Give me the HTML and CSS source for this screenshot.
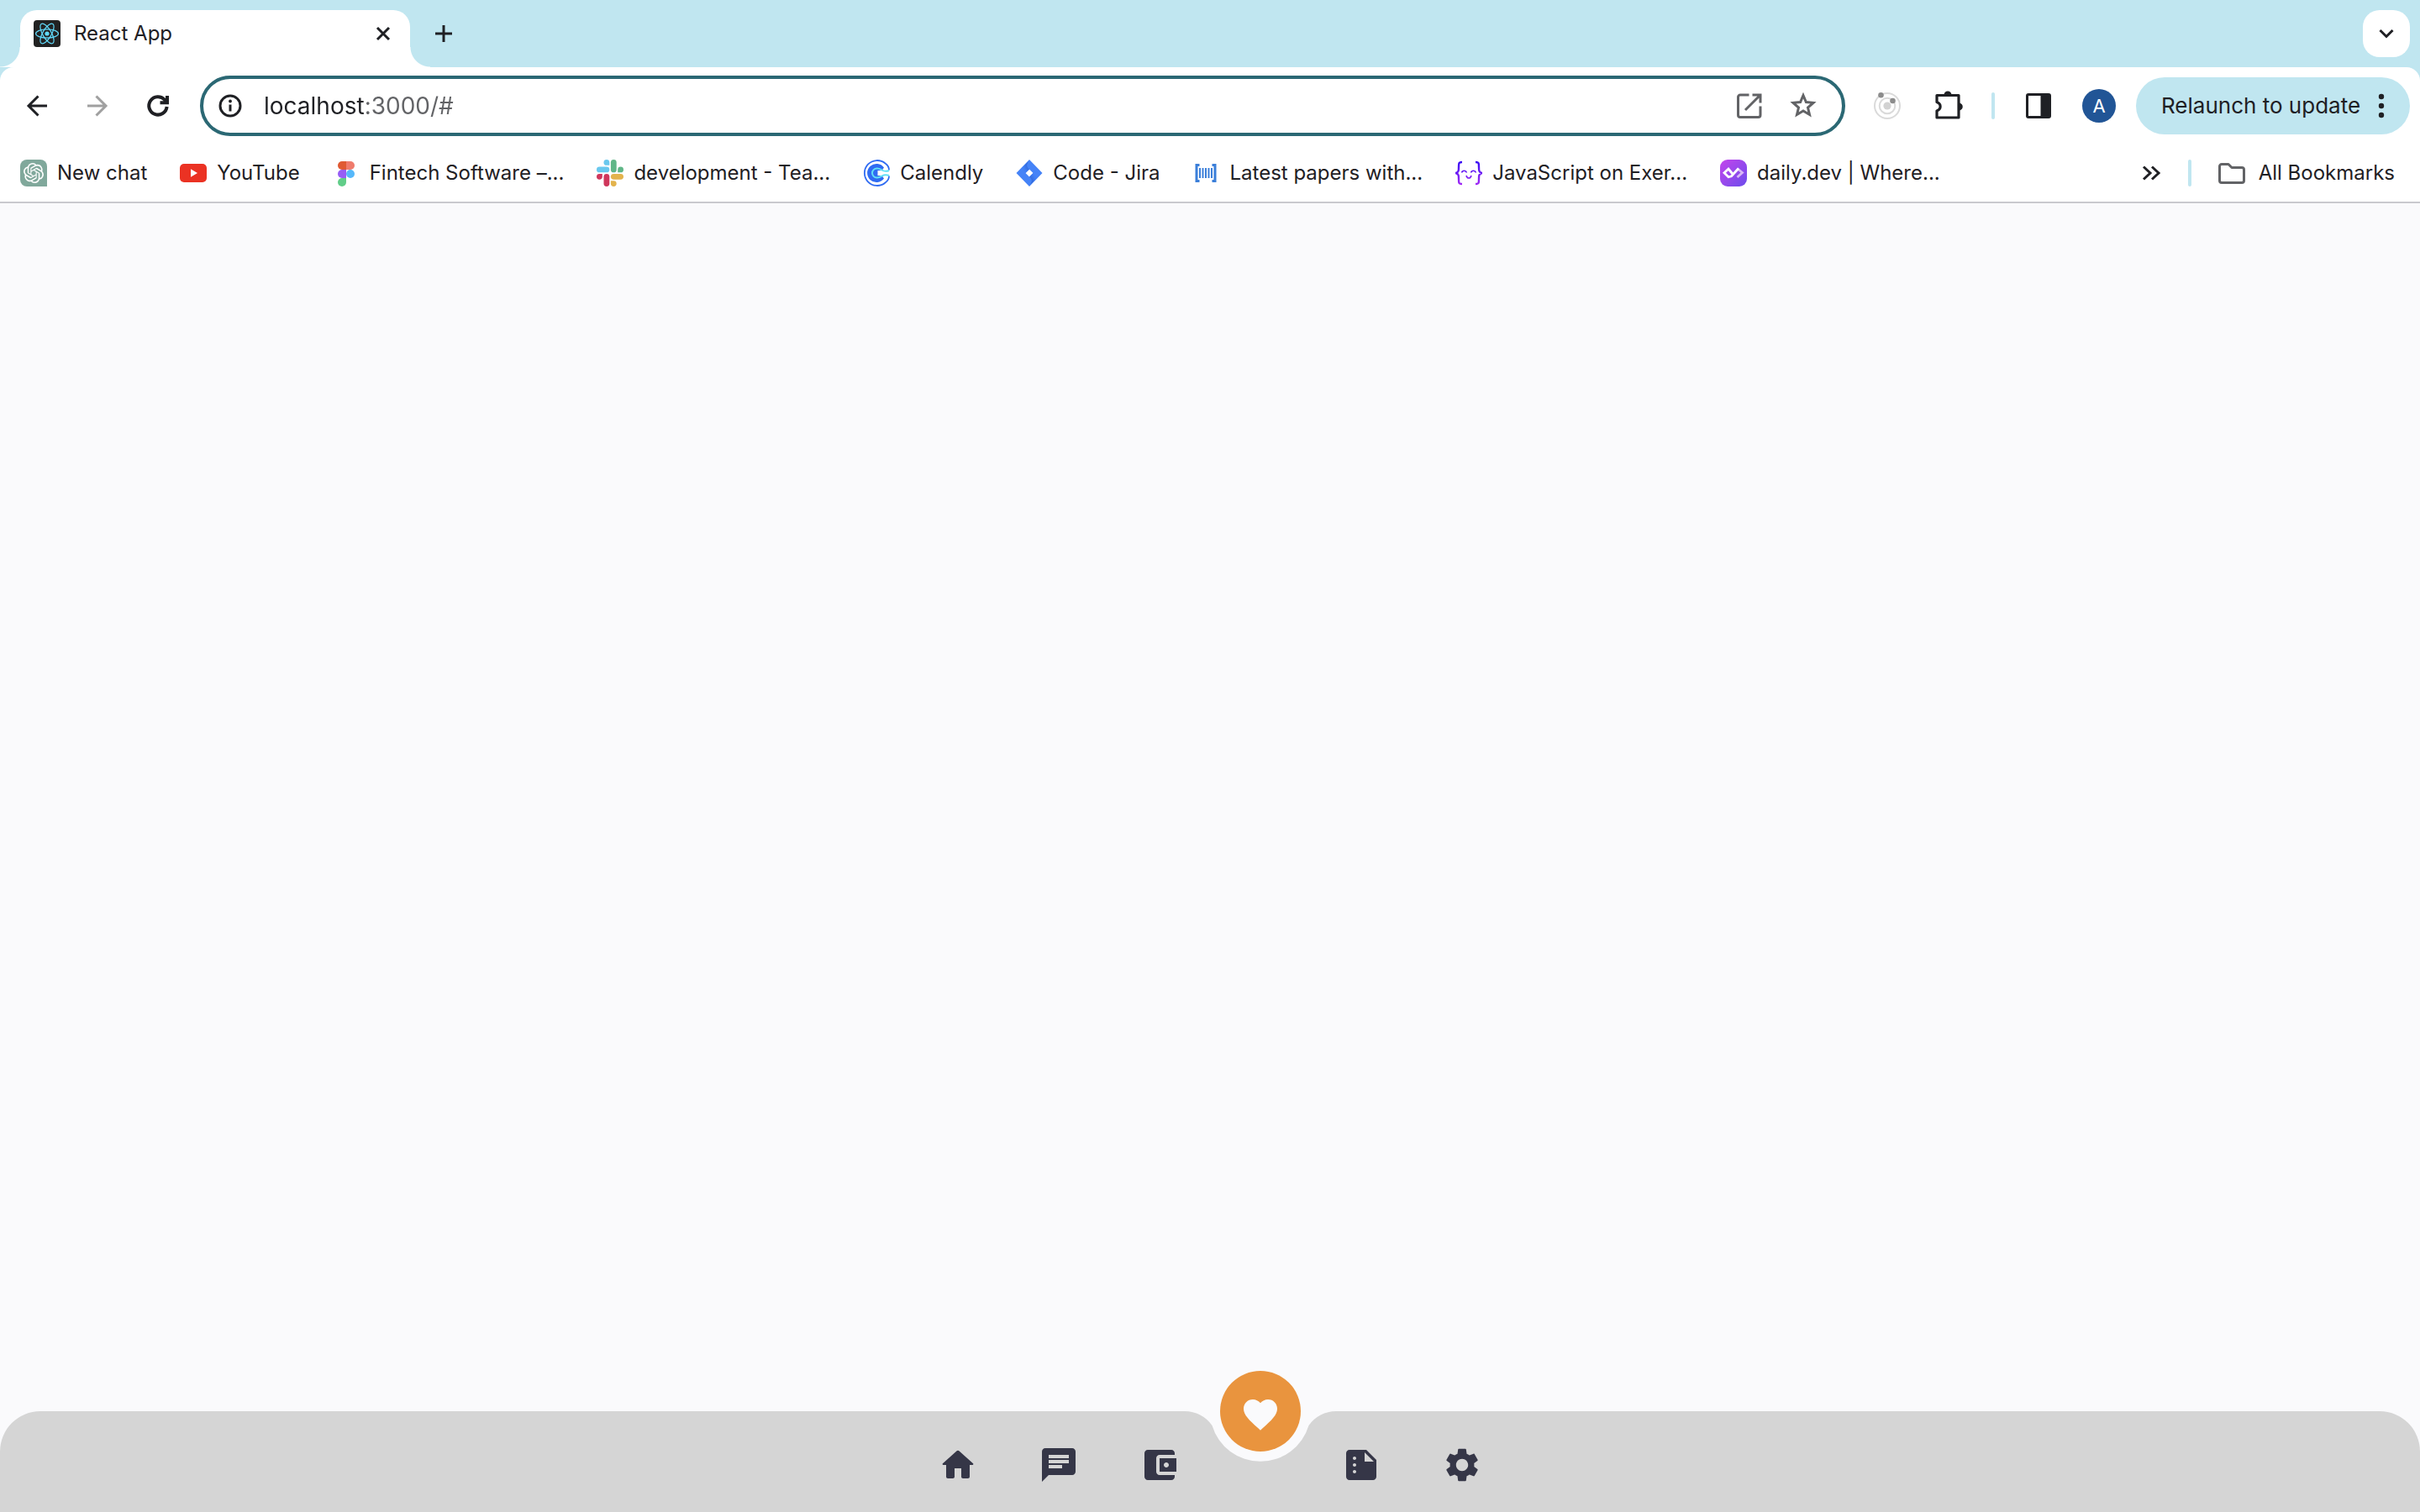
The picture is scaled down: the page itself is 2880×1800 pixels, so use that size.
FILE: index.html
```html
<!DOCTYPE html>
<html lang="en">
<head>
<meta charset="utf-8">
<meta name="viewport" content="width=device-width, initial-scale=1">
<title>React App</title>
<link rel="stylesheet" href="styles.css">
</head>
<body>
<header class="browser">
  <div class="tab-strip">
    <div class="tab">
      <svg class="icon" viewBox="0 0 32 32" aria-hidden="true"><rect width="32" height="32" rx="4" fill="#222"/><g fill="none" stroke="#61dafb" stroke-width="1.2"><ellipse cx="16" cy="16" rx="13.4" ry="5.2"/><ellipse cx="16" cy="16" rx="13.4" ry="5.2" transform="rotate(60 16 16)"/><ellipse cx="16" cy="16" rx="13.4" ry="5.2" transform="rotate(120 16 16)"/></g><circle cx="16" cy="16" r="2.6" fill="#61dafb"/></svg>
      <span class="tab-title">React App</span>
      <button class="icon-button small" type="button" aria-label="Close tab"><svg class="icon" viewBox="0 0 32 32"><path class="line thin" d="M9 9l14 14M23 9L9 23"/></svg></button>
    </div>
    <button class="icon-button" type="button" aria-label="New tab"><svg class="icon" viewBox="0 0 32 32"><path class="line thin" d="M16 6v20M6 16h20"/></svg></button>
    <button class="tab-search" type="button" aria-label="Search tabs"><svg class="icon" viewBox="0 0 32 32"><path class="line thin" d="M8.500 12l7.500 7.500 7.500-7.500"/></svg></button>
  </div>

  <div class="toolbar">
    <div class="history">
      <button class="icon-button" type="button" aria-label="Back"><svg class="icon" viewBox="0 0 32 32"><path class="line thin" d="M28 16H6M17.500 4.500L6 16l11.500 11.500"/></svg></button>
      <button class="icon-button muted" type="button" aria-label="Forward"><svg class="icon" viewBox="0 0 32 32"><path class="line thin" d="M4 16h22M14.500 4.500L26 16 14.500 27.500"/></svg></button>
      <button class="icon-button" type="button" aria-label="Reload"><svg class="icon" viewBox="0 0 32 32"><path class="line" stroke-width="3.500" d="M26.600 17A10.700 10.700 0 1 1 24 8.800l3 3M27 4v8.200h-8.500"/></svg></button>
    </div>
    <div class="omnibox">
      <button class="icon-button site-info" type="button" aria-label="Site information"><svg class="icon" viewBox="0 0 32 32"><circle class="line thin" cx="16" cy="16" r="12"/><path class="line thin" d="M16 14.500v8"/><circle cx="16" cy="10.500" r="1.900" fill="currentColor"/></svg></button>
      <input class="url" type="text" value="localhost:3000/#" aria-label="Address and search bar">
      <button class="icon-button soft" type="button" aria-label="Open in app"><svg class="icon" viewBox="0 0 32 32"><path class="line thin" d="M15.500 3H5a2.500 2.500 0 0 0-2.500 2.500v21.500A2.500 2.500 0 0 0 5 29.500h21.500a2.500 2.500 0 0 0 2.500-2.500V16.500M19.500 3H29v9.500M28.500 3.500L11 21"/></svg></button>
      <button class="icon-button soft" type="button" aria-label="Bookmark this tab"><svg class="icon" viewBox="0 0 32 32"><path class="line thin" stroke-linejoin="miter" d="M16 3.500l3.400 8 8.600.8-6.500 5.700 2 8.500-7.500-4.500-7.500 4.500 2-8.500L4 12.300l8.600-.8z"/></svg></button>
    </div>
    <div class="actions">
      <button class="icon-button" type="button" aria-label="Orbit extension"><svg class="icon" viewBox="0 0 32 32"><g fill="none" stroke="#dadada" stroke-width="2"><circle cx="16" cy="16" r="15"/><circle cx="16" cy="16" r="9.300"/></g><circle cx="16" cy="16" r="4.600" fill="#d2d2d2"/><g fill="#8c8c8c"><circle cx="8.500" cy="3.300" r="3.300"/><circle cx="22.500" cy="10" r="3.300"/></g></svg></button>
      <button class="icon-button" type="button" aria-label="Extensions"><svg class="icon large" viewBox="0 0 36 36"><path fill="none" stroke="currentColor" stroke-width="3.200" stroke-linejoin="round" d="M5 5.500h26v26.500H5v-8c5.500-2 5.500-8.500 0-10.500z"/><path fill="currentColor" d="M13.500 5a4.500 4.500 0 0 1 9 0zM32 14.500c5 1 5 8 0 9z"/></svg></button>
      <span class="divider"></span>
      <button class="icon-button" type="button" aria-label="Side panel"><svg class="icon" viewBox="0 0 32 32"><rect class="line thin" x="2.500" y="2.500" width="27" height="27" rx="1.500"/><path fill="currentColor" d="M18.500 3H29v26H18.500z"/></svg></button>
      <button class="avatar" type="button">A</button>
    </div>
    <button class="relaunch" type="button">Relaunch to update<svg class="dots" viewBox="0 0 8 32" aria-hidden="true"><g fill="currentColor"><circle cx="4" cy="5" r="3.200"/><circle cx="4" cy="16" r="3.200"/><circle cx="4" cy="27" r="3.200"/></g></svg></button>
  </div>

  <nav class="bookmarks" aria-label="Bookmarks">
    <a class="bookmark" href="#"><svg class="icon" viewBox="0 0 32 32"><path fill="#80a89b" d="M8 0h16a8 8 0 0 1 8 8v24H8a8 8 0 0 1-8-8V8a8 8 0 0 1 8-8z"/><path fill="#fff" transform="translate(4 4)" d="M22.2819 9.8211a5.9847 5.9847 0 0 0-.5157-4.9108 6.0462 6.0462 0 0 0-6.5098-2.9A6.0651 6.0651 0 0 0 4.9807 4.1818a5.9847 5.9847 0 0 0-3.9977 2.9 6.0462 6.0462 0 0 0 .7427 7.0966 5.98 5.98 0 0 0 .511 4.9107 6.051 6.051 0 0 0 6.5146 2.9001A5.9847 5.9847 0 0 0 13.2599 24a6.0557 6.0557 0 0 0 5.7718-4.2058 5.9894 5.9894 0 0 0 3.9977-2.9001 6.0557 6.0557 0 0 0-.7475-7.0729zm-9.022 12.6081a4.4755 4.4755 0 0 1-2.8764-1.0408l.1419-.0804 4.7783-2.7582a.7948.7948 0 0 0 .3927-.6813v-6.7369l2.02 1.1686a.071.071 0 0 1 .038.052v5.5826a4.504 4.504 0 0 1-4.4945 4.4944zm-9.6607-4.1254a4.4708 4.4708 0 0 1-.5346-3.0137l.142.0852 4.783 2.7582a.7712.7712 0 0 0 .7806 0l5.8428-3.3685v2.3324a.0804.0804 0 0 1-.0332.0615L9.74 19.9502a4.4992 4.4992 0 0 1-6.1408-1.6464zM2.3408 7.8956a4.485 4.485 0 0 1 2.3655-1.9728V11.6a.7664.7664 0 0 0 .3879.6765l5.8144 3.3543-2.0201 1.1685a.0757.0757 0 0 1-.071 0l-4.8303-2.7865A4.504 4.504 0 0 1 2.3408 7.872zm16.5963 3.8558L13.1038 8.364 15.1192 7.2a.0757.0757 0 0 1 .071 0l4.8303 2.7913a4.4944 4.4944 0 0 1-.6765 8.1042v-5.6772a.79.79 0 0 0-.407-.667zm2.0107-3.0231l-.142-.0852-4.7735-2.7818a.7759.7759 0 0 0-.7854 0L9.409 9.2297V6.8974a.0662.0662 0 0 1 .0284-.0615l4.8303-2.7866a4.4992 4.4992 0 0 1 6.6802 4.66zM8.3065 12.863l-2.02-1.1638a.0804.0804 0 0 1-.038-.0567V6.0742a4.4992 4.4992 0 0 1 7.3757-3.4537l-.142.0805L8.704 5.459a.7948.7948 0 0 0-.3927.6813zm1.0976-2.3654l2.602-1.4998 2.6069 1.4998v2.9994l-2.5974 1.4997-2.6067-1.4997Z"/></svg><span>New chat</span></a>
    <a class="bookmark" href="#"><svg class="icon" viewBox="0 0 32 32"><rect y="5" width="32" height="22" rx="5" fill="#eb3223"/><path fill="#fff" d="M13 11.300l8 4.700-8 4.700z"/></svg><span>YouTube</span></a>
    <a class="bookmark" href="#"><svg class="icon" viewBox="0 0 32 32"><path fill="#e05a33" d="M16 2h-5a5 5 0 0 0 0 10h5z"/><path fill="#ef7b6c" d="M16 2h5a5 5 0 0 1 0 10h-5z"/><path fill="#975df6" d="M16 12h-5a5 5 0 0 0 0 10h5z"/><circle cx="21" cy="17" r="5" fill="#56b8fa"/><path fill="#61cd89" d="M16 22h-5a5 5 0 1 0 5 5z"/></svg><span>Fintech Software –...</span></a>
    <a class="bookmark" href="#"><svg class="icon" viewBox="0 0 32 32"><g fill="#69c8ee"><rect y="8.500" width="15.300" height="6.800" rx="3.400"/><path d="M15.300 6.800h-3.400A3.400 3.400 0 1 1 15.300 3.400z"/></g><g fill="#60b687"><rect x="16.900" width="6.800" height="15.300" rx="3.400"/><path d="M25.200 15.300v-3.400a3.400 3.400 0 1 1 3.400 3.400z"/></g><g fill="#e3b34c"><rect x="16.900" y="16.900" width="15.100" height="6.800" rx="3.400"/><path d="M16.900 25.200h3.400a3.400 3.400 0 1 1-3.400 3.400z"/></g><g fill="#cf375c"><rect x="8.500" y="16.900" width="6.800" height="15.100" rx="3.400"/><path d="M6.800 16.900v3.400a3.400 3.400 0 1 1-3.400-3.400z"/></g></svg><span>development - Tea...</span></a>
    <a class="bookmark" href="#"><svg class="icon" viewBox="0 0 32 32"><path fill="none" stroke="#2f6bf2" stroke-width="1.800" d="M31 12.500c0-3-2-6.300-4.500-8A15 15 0 1 0 26.500 27.500c2.500-1.700 4.500-5 4.500-8"/><path fill="#2f6bf2" d="M25 9.500A11 11 0 1 0 25 22.500l-2.500-3.500h-5v-6h5z"/><path fill="none" stroke="#62dff5" stroke-width="2" d="M31 13c-3.500 1.500-6 1-8.500-.5-2-1.200-3-2-5.500-2h-.5a5.500 5.500 0 0 0 0 11h.5c2.500 0 3.500-.8 5.500-2 2.500-1.500 5-2 8.500-.5"/></svg><span>Calendly</span></a>
    <a class="bookmark" href="#"><svg class="icon" viewBox="0 0 32 32"><defs><linearGradient id="jira-a" x1="0" y1="1" x2="1" y2="0"><stop offset=".3" stop-color="#4180f6"/><stop offset="1" stop-color="#2456c6"/></linearGradient><linearGradient id="jira-b" x1="1" y1="0" x2="0" y2="1"><stop offset=".3" stop-color="#4180f6"/><stop offset="1" stop-color="#2456c6"/></linearGradient></defs><path fill="#4583f7" fill-rule="evenodd" d="M16 0l15.500 16L16 32 .5 16zM16 11.500L11.500 16l4.500 4.500 4.500-4.500z"/><path fill="url(#jira-a)" d="M16 1c-4 4-3.500 8 0 10.500L11.500 16 7 10z"/><path fill="url(#jira-b)" d="M16 20.500l4.500-4.500 4.500 6-9 9c4-4 3.500-8 0-10.500z"/></svg><span>Code - Jira</span></a>
    <a class="bookmark" href="#"><svg class="icon" viewBox="0 0 32 32"><g fill="none" stroke="#3b7fd9"><path stroke-width="3" d="M8.500 6.500H5v19h3.500M23.500 6.500H27v19h-3.500"/><path stroke-width="2" d="M9 10v12M12.500 10v12M16 10v12M19.500 10v12M23 10v12"/></g></svg><span>Latest papers with...</span></a>
    <a class="bookmark" href="#"><svg class="icon" viewBox="0 0 32 32"><defs><linearGradient id="exercism" x1="0" y1="0" x2="0" y2="32" gradientUnits="userSpaceOnUse"><stop stop-color="#2e09f4"/><stop offset="1" stop-color="#aa2df5"/></linearGradient></defs><g fill="none" stroke="url(#exercism)" stroke-width="2.400"><path d="M8 3c-4 0-4 1-4 6 0 4 0 6-3.500 7C4 17 4 19 4 23c0 5 0 6 4 6M24 3c4 0 4 1 4 6 0 4 0 6 3.500 7-3.500 1-3.500 3-3.500 7 0 5 0 6-4 6"/><path stroke-width="1.600" d="M7.500 15.500c1-3 5-3 6 0M18.500 15.500c1-3 5-3 6 0M13 19c1 4 5 4 6 0"/></g></svg><span>JavaScript on Exer...</span></a>
    <a class="bookmark" href="#"><svg class="icon" viewBox="0 0 32 32"><defs><linearGradient id="daily" x1="0" y1="0" x2="1" y2="1"><stop stop-color="#c445ec"/><stop offset="1" stop-color="#6c4cec"/></linearGradient></defs><rect width="32" height="32" rx="9" fill="url(#daily)"/><path fill="none" stroke="#d9b8f6" stroke-width="2.800" d="M20.500 10.500l6 5-6 5.500"/><path fill="none" stroke="#fff" stroke-width="2.800" d="M14.500 16.500L10 11l-5 4.800 5 5 3.500-1L22 10.500"/></svg><span>daily.dev | Where...</span></a>
    <button class="icon-button overflow" type="button" aria-label="More bookmarks"><svg class="icon" viewBox="0 0 32 32"><path class="line thin" d="M7 8.500l8 7.500-8 7.500M17 8.500l8 7.500-8 7.500"/></svg></button>
    <span class="divider"></span>
    <a class="bookmark all" href="#"><svg class="icon soft" viewBox="0 0 32 32"><path class="line thin" stroke-linejoin="round" d="M4 5.500h8l4 4h12a2.500 2.500 0 0 1 2.500 2.500v13a2.500 2.500 0 0 1-2.500 2.500H4A2.500 2.500 0 0 1 1.500 25V8A2.500 2.500 0 0 1 4 5.500z"/></svg><span>All Bookmarks</span></a>
  </nav>
</header>

<main class="page"></main>

<nav class="dock" aria-label="Main">
  <ul class="dock-list">
    <li><a class="dock-link" href="#" aria-label="Home"><svg viewBox="0 0 24 24"><path d="M10 19v-5h4v5c0 .55.45 1 1 1h3c.55 0 1-.45 1-1v-7h1.700c.46 0 .68-.57.33-.87L12.670 3.600c-.38-.34-.96-.34-1.340 0l-8.360 7.530c-.34.3-.13.87.33.87H5v7c0 .55.45 1 1 1h3c.55 0 1-.45 1-1z"/></svg></a></li>
    <li><a class="dock-link" href="#" aria-label="Messages"><svg viewBox="0 0 24 24"><path d="M20 2H4c-1.100 0-1.990.9-1.990 2L2 22l4-4h14c1.100 0 2-.9 2-2V4c0-1.100-.9-2-2-2zM6 9h12v2H6V9zm8 5H6v-2h8v2zm4-6H6V6h12v2z"/></svg></a></li>
    <li><a class="dock-link" href="#" aria-label="Wallet"><svg viewBox="0 0 24 24"><path d="M21 18v1c0 1.100-.9 2-2 2H5c-1.110 0-2-.9-2-2V5c0-1.100.89-2 2-2h14c1.100 0 2 .9 2 2v1h-9c-1.110 0-2 .9-2 2v8c0 1.100.89 2 2 2h9zm-9-2h10V8H12v8zm4-2.500c-.83 0-1.500-.67-1.500-1.500s.67-1.500 1.500-1.500 1.500.67 1.500 1.500-.67 1.500-1.500 1.500z"/></svg></a></li>
    <li class="active">
      <svg class="notch" viewBox="0 0 180 60" aria-hidden="true"><path d="M0 0A40 40 0 0 1 32.500 17A60 60 0 0 0 147.500 17A40 40 0 0 1 180 0z"/></svg>
      <a class="favorite" href="#" aria-label="Favorites" aria-current="page"><svg viewBox="0 0 24 24"><path d="M12 21.350l-1.450-1.320C5.400 15.360 2 12.280 2 8.500 2 5.420 4.420 3 7.500 3c1.740 0 3.410.81 4.500 2.090C13.090 3.810 14.760 3 16.500 3 19.580 3 22 5.420 22 8.500c0 3.780-3.400 6.860-8.550 11.540L12 21.350z"/></svg></a>
    </li>
    <li><a class="dock-link" href="#" aria-label="Summary"><svg viewBox="0 0 24 24"><path d="M15 3H5c-1.100 0-1.990.9-1.990 2L3 19c0 1.100.89 2 1.990 2H19c1.100 0 2-.9 2-2V9l-6-6zM8 17c-.55 0-1-.45-1-1s.45-1 1-1 1 .45 1 1-.45 1-1 1zm0-4c-.55 0-1-.45-1-1s.45-1 1-1 1 .45 1 1-.45 1-1 1zm0-4c-.55 0-1-.45-1-1s.45-1 1-1 1 .45 1 1-.45 1-1 1zm6 1V4.500l5.500 5.500H14z"/></svg></a></li>
    <li><a class="dock-link" href="#" aria-label="Settings"><svg viewBox="0 0 24 24"><path d="M19.140 12.940c.04-.3.06-.61.06-.94 0-.32-.02-.64-.07-.94l2.030-1.580c.18-.14.23-.41.12-.61l-1.920-3.320c-.12-.22-.37-.29-.59-.22l-2.390.96c-.5-.38-1.030-.7-1.620-.94l-.36-2.540c-.04-.24-.24-.41-.48-.41h-3.840c-.24 0-.43.17-.47.41l-.36 2.540c-.59.24-1.130.57-1.620.94l-2.390-.96c-.22-.08-.47 0-.59.22L2.740 8.870c-.12.21-.08.47.12.61l2.030 1.580c-.05.3-.09.63-.09.94s.02.64.07.94l-2.030 1.580c-.18.14-.23.41-.12.61l1.920 3.320c.12.22.37.29.59.22l2.390-.96c.5.38 1.030.7 1.620.94l.36 2.540c.05.24.24.41.48.41h3.840c.24 0 .44-.17.47-.41l.36-2.540c.59-.24 1.130-.56 1.620-.94l2.390.96c.22.08.47 0 .59-.22l1.920-3.320c.12-.22.07-.47-.12-.61l-2.010-1.580zM12 15.600c-1.980 0-3.600-1.620-3.600-3.600s1.620-3.600 3.600-3.600 3.600 1.620 3.600 3.600-1.620 3.600-3.600 3.600z"/></svg></a></li>
  </ul>
</nav>
</body>
</html>
```
FILE: styles.css
```css
:root {
  --frame: #c0e6f0;
  --ink: #1f2024;
  --soft: #626366;
  --page: #fafafc;
  --dock: #d5d5d5;
  --dock-ink: #353647;
}

* { box-sizing: border-box; }

body {
  margin: 0;
  min-height: 100vh;
  display: flex;
  flex-direction: column;
  background: var(--page);
  color: var(--ink);
  font: 24px/32px Inter, "Liberation Sans", sans-serif;
}

a { color: inherit; text-decoration: none; }

button {
  border: 0;
  padding: 0;
  background: none;
  color: inherit;
  font: inherit;
}

.browser { background: var(--frame); }

.icon { display: block; width: 32px; height: 32px; flex: none; }
.icon.large { width: 36px; height: 36px; }
.line { fill: none; stroke: currentColor; stroke-width: 4; }
.line.thin { stroke-width: 3; }

.icon-button {
  display: flex;
  align-items: center;
  justify-content: center;
  flex: none;
  width: 40px;
  height: 40px;
}
.icon-button.small { width: 32px; }
.muted { color: #a0a0a0; }
.soft { color: var(--soft); }

.divider {
  flex: none;
  width: 4px;
  height: 32px;
  border-radius: 2px;
  background: var(--frame);
}

/* Tab strip */
.tab-strip {
  display: flex;
  align-items: center;
  height: 80px;
  padding: 12px 12px 12px 24px;
}

.tab {
  position: relative;
  display: flex;
  align-items: center;
  align-self: flex-start;
  gap: 16px;
  width: 464px;
  height: 68px;
  margin-right: 20px;
  padding: 0 16px 12px;
  border-radius: 20px 20px 0 0;
  background: #fff;
}
.tab::before,
.tab::after {
  content: "";
  position: absolute;
  bottom: 0;
  width: 24px;
  height: 24px;
}
.tab::before {
  right: 100%;
  background: radial-gradient(circle at 0 0, transparent 23px, #fff 24px);
}
.tab::after {
  left: 100%;
  background: radial-gradient(circle at 100% 0, transparent 23px, #fff 24px);
}
.tab-title { flex: 1; }

.tab-search {
  display: flex;
  align-items: center;
  justify-content: center;
  width: 56px;
  height: 56px;
  margin-left: auto;
  border-radius: 20px;
  background: #fff;
}

/* Toolbar */
.toolbar {
  display: flex;
  align-items: center;
  height: 92px;
  padding: 0 12px 0 24px;
  border-radius: 16px 16px 0 0;
  background: #fff;
}
.history, .actions {
  display: flex;
  align-items: center;
  gap: 32px;
}

.omnibox {
  display: flex;
  align-items: center;
  flex: 1;
  gap: 24px;
  height: 72px;
  margin: 0 30px;
  padding: 0 26px 0 16px;
  border: 4px solid #2b6874;
  border-radius: 36px;
}
.site-info { width: 32px; }
.url {
  flex: 1;
  min-width: 0;
  height: 40px;
  padding: 0;
  border: 0;
  outline: 0;
  font: 28px/40px Inter, "Liberation Sans", sans-serif;
  /* The host is dark, the port and path are grey */
  background: linear-gradient(90deg, var(--ink) 121px, var(--soft) 121px);
  background-clip: text;
  -webkit-text-fill-color: transparent;
}

.avatar {
  width: 40px;
  height: 40px;
  border-radius: 50%;
  background: #215596;
  color: #fff;
  font-size: 22px;
}

.relaunch {
  display: flex;
  align-items: center;
  justify-content: space-between;
  min-width: 326px;
  height: 68px;
  margin-left: 24px;
  padding: 0 30px;
  border-radius: 34px;
  background: var(--frame);
  font-size: 26px;
}
.dots { width: 8px; height: 32px; }

/* Bookmarks bar */
.bookmarks {
  display: flex;
  align-items: center;
  height: 70px;
  padding: 0 30px 0 24px;
  border-bottom: 2px solid #c9c9ce;
  background: #fff;
}
.bookmark {
  display: flex;
  align-items: center;
  gap: 12px;
  margin-right: 39px;
  white-space: nowrap;
}
.bookmark.all { gap: 16px; margin: 0 0 0 32px; }
.overflow { margin: 0 24px 0 auto; }

.page { flex: 1; }

/* Bottom dock */
.dock {
  height: 120px;
  border-radius: 48px 48px 0 0;
  background: var(--dock);
}
.dock-list {
  display: grid;
  grid-template-columns: repeat(6, 120px);
  justify-content: center;
  margin: 0;
  padding: 0;
  list-style: none;
}
.dock-link {
  display: flex;
  align-items: center;
  justify-content: center;
  height: 128px;
}
.dock-link svg, .favorite svg { width: 48px; height: 48px; fill: currentColor; }
.dock-link { color: var(--dock-ink); }

.active { position: relative; }
.notch {
  position: absolute;
  top: 0;
  left: -30px;
  width: 180px;
  height: 60px;
  fill: var(--page);
}
.favorite {
  position: absolute;
  top: -48px;
  left: 12px;
  display: flex;
  align-items: center;
  justify-content: center;
  width: 96px;
  height: 96px;
  padding-top: 8px;
  border-radius: 50%;
  background: #e9943e;
  color: var(--page);
}
```
